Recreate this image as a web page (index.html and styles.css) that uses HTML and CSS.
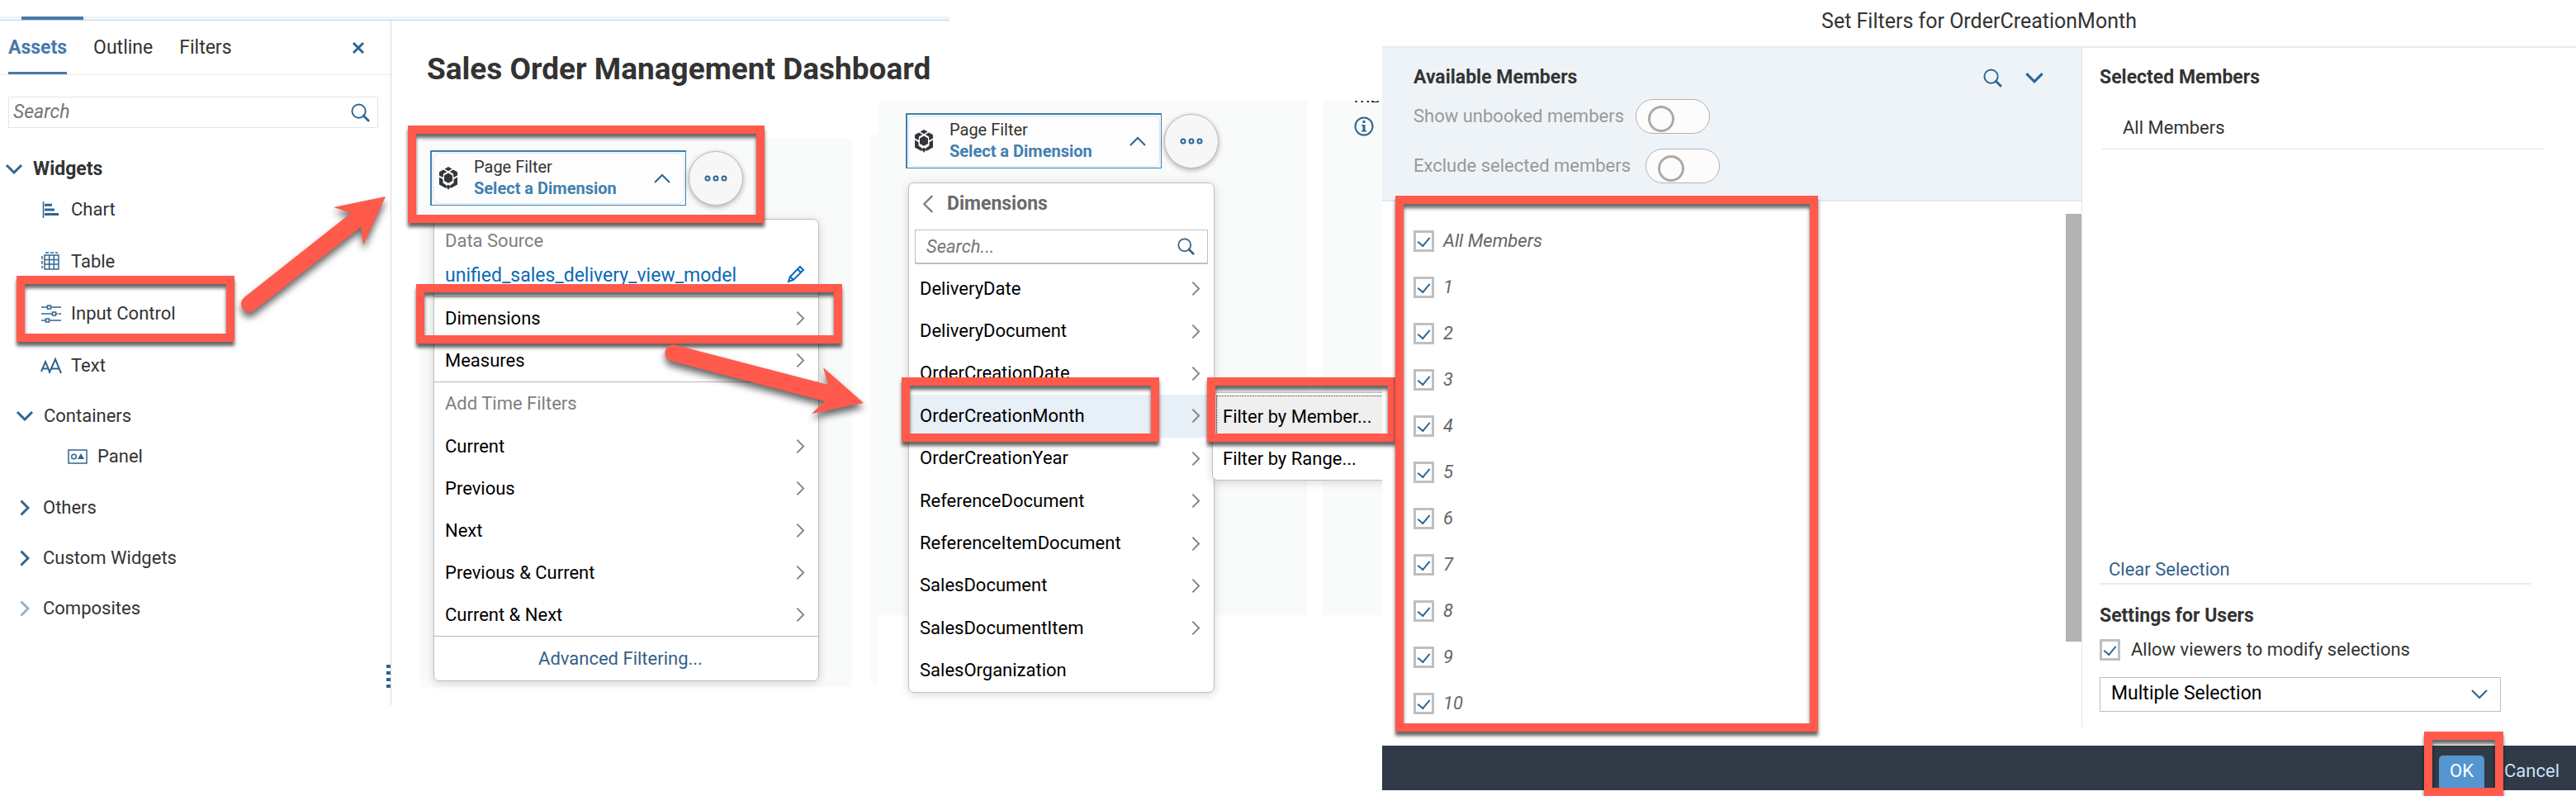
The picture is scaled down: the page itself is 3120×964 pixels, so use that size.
FILE: index.html
```html
<!DOCTYPE html>
<html lang="en">
<head>
<meta charset="utf-8">
<title>Sales Order Management Dashboard</title>
<link rel="stylesheet" href="styles.css">
</head>
<body>
<svg class="defs" aria-hidden="true">
  <symbol id="right" viewBox="0 0 12 20"><path d="M1.500 1.500 10 10 1.500 18.500"/></symbol>
  <symbol id="down" viewBox="0 0 22 14"><path d="M2 2 11 11 20 2"/></symbol>
  <symbol id="search" viewBox="0 0 24 24"><circle cx="10" cy="10" r="8.500"/><path d="m16 16 6 6" class="heavy"/></symbol>
  <symbol id="cube" viewBox="0 0 24 28">
    <path class="solid" d="M12 0 16.500 2.600 12 5.200 7.500 2.600zM6 3.500 10.300 6 6 8.600 5.600 13 1 10.400V6.200zM18 3.500 13.700 6 18 8.600 18.400 13 23 10.400V6.200zM12 7.600 17 10.400V17L12 19.800 7 17V10.400zM1 12.500 5.500 15.200V19.500L9.500 22.200V26.300L1 21.600zM23 12.500 18.500 15.200V19.500L14.500 22.200V26.300L23 21.600zM12 21.800 14.800 23.500 12 28 9.200 23.500z"/>
  </symbol>
</svg>
<main class="page">
  <section class="workspace">
    <div class="strip"><span class="strip-mark"></span></div>
    <div class="work">
      <aside class="side">
        <nav class="tabs">
          <button class="tab active">Assets</button>
          <button class="tab">Outline</button>
          <button class="tab">Filters</button>
          <button class="close" aria-label="Close"><svg class="ic-close" viewBox="0 0 16 16"><path d="m2 2 12 12M14 2 2 14"/></svg></button>
        </nav>
        <div class="side-search">
          <input type="search" placeholder="Search" aria-label="Search assets">
          <svg class="ic-search"><use href="#search"/></svg>
        </div>
        <div class="tree">
          <button class="group root"><svg class="ic-down"><use href="#down"/></svg>Widgets</button>
          <button class="item"><svg class="ic-item" viewBox="0 0 26 24"><path d="M3.500 2v20" /><path class="bar" d="M5 6.200h9M5 12h12M5 17.500h17"/></svg>Chart</button>
          <button class="item"><svg class="ic-item" viewBox="0 0 26 24"><path d="M5 4h17v17H5zM5 9.500h17M5 15h17M10.700 4v17M16.300 4v17M6 1h4M12 1h4M18 1h3M2 5v4M2 11v4M2 17v3"/></svg>Table</button>
          <div class="anchor">
            <button class="item"><svg class="ic-item" viewBox="0 0 26 24"><path d="M1 4h7M13 4h12M8.500 2h4v4h-4zM1 12h13M19 12h2M22 12h3M14.500 10h4v4h-4zM1 20h5M11 20h14M6.500 18h4v4h-4z"/></svg>Input Control</button>
            <span class="callout on-input"></span>
            <svg class="arrow arrow-up" viewBox="0 0 180 150"><path d="M171 6 108 19 129 26 0 128A10 10 0 0 0 12 144L141 43 144 65Z" transform="translate(6 0)"/></svg>
          </div>
          <button class="item"><svg class="ic-item" viewBox="0 0 26 24"><path class="bold" d="M1 19 6 7l5 12M3 15.500h6M10.500 21 18 4l7 17M13 15.500h10"/></svg>Text</button>
          <button class="group"><svg class="ic-down"><use href="#down"/></svg>Containers</button>
          <button class="item sub"><svg class="ic-item" viewBox="0 0 26 24"><path d="M2 4h22v16H2z"/><circle cx="8.500" cy="12" r="2.800"/><path class="solid" d="M13 15 17 8l4 7z"/></svg>Panel</button>
          <button class="group closed"><svg class="ic-right"><use href="#right"/></svg>Others</button>
          <button class="group closed next"><svg class="ic-right"><use href="#right"/></svg>Custom Widgets</button>
          <button class="group closed next"><svg class="ic-right faded"><use href="#right"/></svg>Composites</button>
        </div>
        <div class="grip"><i></i><i></i><i></i><i></i></div>
      </aside>

      <section class="canvas">
        <h1 class="title">Sales Order Management Dashboard</h1>
        <div class="board">
          <div class="panel first">
            <div class="filter-row">
              <button class="filter"><span class="filter-box"><svg class="ic-cube"><use href="#cube"/></svg><span class="filter-text"><span>Page Filter</span><b>Select a Dimension</b></span><svg class="ic-up"><use href="#down"/></svg></span></button>
              <button class="more" aria-label="More"><svg class="ic-dots" viewBox="0 0 28 10"><circle cx="4" cy="5" r="2.500"/><circle cx="14" cy="5" r="2.500"/><circle cx="24" cy="5" r="2.500"/></svg></button>
              <span class="callout on-filter"></span>
            </div>
            <div class="menu main-menu">
              <div class="caption">Data Source</div>
              <div class="source"><a href="#">unified_sales_delivery_view_model</a><svg class="ic-pen" viewBox="0 0 22 22"><path d="M2 20 4 14 16 2l4 4L8 18zM13 5l4 4M4 14l4 4"/></svg></div>
              <div class="anchor">
                <button class="entry">Dimensions<svg class="ic-chev"><use href="#right"/></svg></button>
                <span class="callout on-dimensions"></span>
                <svg class="arrow arrow-right" viewBox="0 0 250 100"><path d="M239 77 190 34 196 55 12 7A10 10 0 0 0 5 26L192 75 176 90Z"/></svg>
              </div>
              <button class="entry">Measures<svg class="ic-chev"><use href="#right"/></svg></button>
              <div class="caption ruled">Add Time Filters</div>
              <button class="entry">Current<svg class="ic-chev"><use href="#right"/></svg></button>
              <button class="entry">Previous<svg class="ic-chev"><use href="#right"/></svg></button>
              <button class="entry">Next<svg class="ic-chev"><use href="#right"/></svg></button>
              <button class="entry">Previous &amp; Current<svg class="ic-chev"><use href="#right"/></svg></button>
              <button class="entry">Current &amp; Next<svg class="ic-chev"><use href="#right"/></svg></button>
              <button class="advanced">Advanced Filtering...</button>
            </div>
          </div>

          <div class="edge"></div>
          <div class="panel second">
            <div class="filter-row">
              <button class="filter"><span class="filter-box"><svg class="ic-cube"><use href="#cube"/></svg><span class="filter-text"><span>Page Filter</span><b>Select a Dimension</b></span><svg class="ic-up"><use href="#down"/></svg></span></button>
              <button class="more" aria-label="More"><svg class="ic-dots" viewBox="0 0 28 10"><circle cx="4" cy="5" r="2.500"/><circle cx="14" cy="5" r="2.500"/><circle cx="24" cy="5" r="2.500"/></svg></button>
            </div>
            <div class="menu dim-menu">
              <button class="back"><svg class="ic-back"><use href="#right"/></svg>Dimensions</button>
              <div class="menu-search"><input type="search" placeholder="Search..." aria-label="Search dimensions"><svg class="ic-search small"><use href="#search"/></svg></div>
              <div class="dims">
                <button class="entry">DeliveryDate<svg class="ic-chev"><use href="#right"/></svg></button>
                <button class="entry">DeliveryDocument<svg class="ic-chev"><use href="#right"/></svg></button>
                <button class="entry">OrderCreationDate<svg class="ic-chev"><use href="#right"/></svg></button>
                <div class="anchor">
                  <button class="entry chosen">OrderCreationMonth<svg class="ic-chev"><use href="#right"/></svg></button>
                  <span class="callout on-month"></span>
                  <div class="menu submenu">
                    <button class="entry focused">Filter by Member...</button>
                    <button class="entry">Filter by Range...</button>
                    <span class="callout on-member"></span>
                  </div>
                </div>
                <button class="entry">OrderCreationYear<svg class="ic-chev"><use href="#right"/></svg></button>
                <button class="entry">ReferenceDocument<svg class="ic-chev"><use href="#right"/></svg></button>
                <button class="entry">ReferenceItemDocument<svg class="ic-chev"><use href="#right"/></svg></button>
                <button class="entry">SalesDocument<svg class="ic-chev"><use href="#right"/></svg></button>
                <button class="entry">SalesDocumentItem<svg class="ic-chev"><use href="#right"/></svg></button>
                <button class="entry">SalesOrganization</button>
              </div>
            </div>
          </div>
          <div class="panel third">
            <div class="clipped">me</div>
            <svg class="ic-info" viewBox="0 0 24 24"><circle cx="12" cy="12" r="10.500"/><path class="solid" d="M10.500 5h3v3h-3zM9 10h4.500v7H15v1.500H9V17h1.500v-5.500H9z"/></svg>
          </div>
        </div>
      </section>
    </div>
  </section>

  <section class="dialog" role="dialog" aria-labelledby="dlg">
    <h2 class="dialog-title" id="dlg">Set Filters for OrderCreationMonth</h2>
    <div class="dialog-body">
      <div class="available">
        <div class="options">
          <div class="options-head"><h3>Available Members</h3>
            <button aria-label="Search members"><svg class="ic-search"><use href="#search"/></svg></button>
            <button aria-label="Expand"><svg class="ic-down large"><use href="#down"/></svg></button></div>
          <label class="switch-row">Show unbooked members<input type="checkbox" class="switch"></label>
          <label class="switch-row wide">Exclude selected members<input type="checkbox" class="switch"></label>
        </div>
        <div class="list-area">
          <div class="members">
            <label class="member"><input type="checkbox" class="check" checked>All Members</label>
            <label class="member"><input type="checkbox" class="check" checked>1</label>
            <label class="member"><input type="checkbox" class="check" checked>2</label>
            <label class="member"><input type="checkbox" class="check" checked>3</label>
            <label class="member"><input type="checkbox" class="check" checked>4</label>
            <label class="member"><input type="checkbox" class="check" checked>5</label>
            <label class="member"><input type="checkbox" class="check" checked>6</label>
            <label class="member"><input type="checkbox" class="check" checked>7</label>
            <label class="member"><input type="checkbox" class="check" checked>8</label>
            <label class="member"><input type="checkbox" class="check" checked>9</label>
            <label class="member"><input type="checkbox" class="check" checked>10</label>
          </div>
          <div class="scroll"></div>
          <span class="callout on-list"></span>
        </div>
      </div>
      <div class="selected">
        <h3>Selected Members</h3>
        <div class="picked">All Members</div>
        <button class="clear">Clear Selection</button>
        <h3 class="settings">Settings for Users</h3>
        <label class="allow"><input type="checkbox" class="check" checked>Allow viewers to modify selections</label>
        <div class="select-box"><select aria-label="Selection type"><option>Multiple Selection</option></select><svg class="ic-select"><use href="#down"/></svg></div>
      </div>
    </div>
    <footer class="foot">
      <div class="anchor"><button class="ok">OK</button><span class="callout on-ok"></span></div>
      <button class="cancel">Cancel</button>
    </footer>
  </section>
</main>
</body>
</html>
```
FILE: styles.css
```css
* { box-sizing: border-box; }
body {
  margin: 0;
  min-height: 100vh;
  background: #fff;
  color: #333;
  font: 22px/26px Roboto, "Liberation Sans", sans-serif;
}
button, input, select { font: inherit; color: inherit; }
button { background: none; border: 0; padding: 0; text-align: left; cursor: pointer; }
h1, h2, h3 { margin: 0; }
h3 { font-size: 23px; line-height: 26px; font-weight: 700; }
svg { fill: none; stroke: #2f6590; stroke-width: 2; flex: none; display: block; }
.solid { fill: #2f6590; stroke: none; }
.heavy { stroke-width: 3; stroke-linecap: round; }
.defs { position: absolute; width: 0; height: 0; }

.page { display: flex; align-items: flex-start; }
.workspace { flex: 1674 1 0; min-width: 0; padding-top: 20px; }
.strip { width: 1150px; height: 5px; background: #eef4f8; border-bottom: 1px solid #c9d9ea; }
.strip-mark { display: block; width: 75px; height: 4px; margin-left: 26px; background: #4779ab; }
.work { display: flex; }
.anchor { position: relative; }

/* Assets side panel */
.side { position: relative; width: 474px; flex: none; border-right: 1px solid #d9d9d9; min-height: 829px; }
.tabs { display: flex; gap: 32px; height: 66px; padding: 0 31px 0 10px; border-bottom: 1px solid #ebebeb; font-size: 23px; }
.tab.active { color: #4779ab; font-weight: 700; border-bottom: 3px solid #4779ab; padding-top: 3px; }
.close { margin-left: auto; }
.ic-close { width: 16px; height: 16px; stroke-width: 3; }
.side-search { display: flex; align-items: center; margin: 26px 15px 0 10px; height: 38px; padding: 0 9px 0 5px; border: 1px solid #e5e5e5; }
.side-search input { font-size: 23px; }
input[type="search"] { flex: 1; min-width: 0; border: 0; outline: 0; padding: 0; background: none; appearance: none; }
input::placeholder { color: #757575; font-style: italic; opacity: 1; }
.ic-search { width: 23px; height: 23px; }
.ic-search.small { width: 21px; height: 21px; }
.tree { display: flex; flex-direction: column; padding-top: 32px; }
.group { display: flex; align-items: center; height: 36px; margin-top: 12px; padding-left: 19px; gap: 12px; }
.group.root { height: 35px; margin-top: 0; padding-left: 6px; font-size: 23px; font-weight: 700; }
.group.closed { padding-left: 24px; gap: 16px; margin-top: 13px; }
.group.closed.next { margin-top: 25px; }
.item { display: flex; align-items: center; gap: 11px; width: 100%; height: 63px; padding-left: 49px; }
.item.sub { height: 62px; padding-left: 81px; }
.ic-down { width: 22px; height: 14px; stroke-width: 3; }
.ic-right { width: 12px; height: 20px; stroke-width: 3; }
.faded { opacity: .5; }
.ic-item { width: 26px; height: 24px; stroke-width: 1.5; }
.bar { stroke-width: 3; }
.bold { stroke-width: 2; }
.grip { position: absolute; right: 0; bottom: 21px; display: grid; gap: 4px; }
.grip i { width: 5px; height: 4px; background: #2f6590; }

/* Canvas */
.canvas { flex: 1; min-width: 0; }
.title { padding: 37px 0 16px 43px; font-size: 37px; line-height: 44px; font-weight: 700; white-space: nowrap; }
.board { display: flex; align-items: flex-start; }
.panel { background: #f8fbfa; }
.first { width: 523px; flex: none; margin: 45px 0 0 35px; padding: 15px 0 7px 12px; }
.edge { width: 9px; height: 666px; flex: none; margin: 41px 0 0 23px; background: #f8fbfa; }
.second { position: relative; width: 519px; height: 623px; flex: none; padding: 15px 0 0 33px; }
.third { flex: 1; height: 623px; margin-left: 19px; padding-left: 38px; }
.clipped { height: 2px; display: flex; align-items: flex-end; overflow: hidden; line-height: 12px; color: #000; }
.ic-info { width: 24px; height: 24px; margin-top: 17px; }

.filter-row { position: relative; display: flex; align-items: center; gap: 3px; }
.filter { width: 310px; height: 67px; padding: 1px; border: 1px solid #4080b0; border-width: 2px 1px 1px 2px; font-size: 20px; line-height: 26px; }
.filter-box { display: flex; align-items: center; height: 100%; border: 1px solid #d5e7f5; border-radius: 8px; background: #fdfdfd; padding: 0 15px 0 6px; }
.ic-cube { width: 24px; height: 28px; }
#cube .solid { fill: #32363a; }
.filter-text { display: grid; margin-left: 19px; padding-bottom: 2px; flex: 1; }
.filter-text b { color: #4080b0; }
.ic-up { width: 22px; height: 14px; transform: rotate(180deg); }
.more { display: grid; place-items: center; width: 66px; height: 66px; border-radius: 50%; background: #f7f7f7; border: 1px solid #bbb; box-shadow: 0 2px 6px rgba(0,0,0,.3); }
.ic-dots { width: 28px; height: 10px; }

.menu { background: #fff; border: 1px solid #bfbfbf; border-radius: 7px; box-shadow: 0 2px 12px rgba(0,0,0,.16); color: #000; }
.main-menu { width: 467px; margin: 16px 0 0 4px; }
.caption { display: flex; align-items: center; height: 52px; padding: 0 13px; color: #808080; }
.caption.ruled { border-top: 1px solid #b8b8b8; height: 53px; }
.source { display: flex; justify-content: space-between; height: 42px; padding: 3px 16px 0 13px; border-bottom: 1px solid #b8b8b8; }
.source a { color: #0a6ab4; text-decoration: none; font-size: 23px; }
.ic-pen { width: 22px; height: 22px; stroke: #0a6ab4; }
.entry { display: flex; align-items: center; justify-content: space-between; width: 100%; height: 51px; padding: 0 16px 0 13px; }
.ic-chev { width: 11px; height: 19px; stroke: #808080; }
.advanced { display: block; width: 100%; height: 54px; padding-right: 14px; border-top: 1px solid #b8b8b8; text-align: center; color: #346187; }

.dim-menu { position: absolute; left: 36px; top: 99px; width: 371px; }
.back { display: flex; align-items: center; gap: 16px; height: 56px; padding: 0 0 6px 16px; font-size: 23px; font-weight: 700; color: #6a6a6a; }
.ic-back { width: 14px; height: 24px; stroke: #808080; transform: rotate(180deg); }
.menu-search { display: flex; align-items: center; height: 42px; margin: 0 7px; padding: 0 15px 0 13px; border: 1px solid #bfbfbf; border-bottom-width: 2px; }
.dims { display: grid; grid-auto-rows: 1fr; height: 518px; padding: 4px 0 0; }
.dims .entry { height: 100%; }
.chosen { background: #e7eff7; }
.submenu { position: absolute; left: 367px; top: -3px; width: 220px; padding-top: 3px; }
.dims .submenu .entry { height: 51px; padding-left: 12px; }
.submenu .focused { margin-left: 4px; background: #efefef; border: 1px dotted #333; }
.dims .submenu .focused { padding-left: 7px; }

/* Dialog */
.dialog { position: relative; flex: 1446 1 0; min-width: 0; background: #fff; }
.dialog-title { height: 58px; padding-bottom: 4px; border-bottom: 2px solid #ebebeb; font-size: 25px; line-height: 52px; font-weight: 400; text-align: center; }
.dialog-body { display: grid; grid-template-columns: 848fr 598fr; }
.available { border-right: 1px solid #e2e6ea; }
.options { background: #eef3f8; border-bottom: 2px solid #dfe9f3; padding: 23px 45px 20px 38px; color: #999; }
.options-head { display: flex; align-items: center; gap: 27px; color: #333; }
.options-head h3 { flex: 1; }
.switch-row { display: flex; align-items: center; gap: 14px; margin-top: 13px; }
.switch-row.wide { margin-top: 18px; gap: 18px; }
.switch { appearance: none; width: 90px; height: 42px; margin: 0; border: 1px solid #b3b3b3; border-radius: 21px; background: #fcfcfc; padding: 7px 14px; }
.switch::before { content: ""; display: block; width: 26px; height: 26px; border: 3px solid #aaa; border-radius: 50%; }
.list-area { position: relative; display: flex; }
.members { flex: 1; padding: 20px 0 0 38px; }
.member { display: flex; align-items: center; gap: 11px; height: 56px; font-style: italic; color: #666; }
.check { appearance: none; width: 25px; height: 26px; margin: 0; border: 3px solid #bfbfbf; background: #fff; display: grid; place-items: center; flex: none; }
.check:checked::before { content: ""; width: 7px; height: 12px; margin-bottom: 3px; border: solid #2f6590; border-width: 0 2px 2px 0; transform: rotate(40deg); }
.scroll { width: 19px; height: 518px; margin-top: 15px; background: #b2b2b2; }
.selected { display: flex; flex-direction: column; padding: 23px 0 18px 21px; }
.picked { margin: 35px 39px 0 3px; padding: 0 0 12px 25px; border-bottom: 1px solid #e2e2e2; }
.clear { margin: auto 55px 0 0; padding: 0 0 3px 11px; border-bottom: 2px solid #ebebeb; color: #346187; }
.settings { margin-top: 25px; }
.allow { display: flex; align-items: center; gap: 13px; margin-top: 15px; }
.select-box { position: relative; width: 486px; margin-top: 20px; }
.select-box select { appearance: none; display: block; width: 100%; height: 42px; padding: 0 13px 2px; border: 1px solid #bfbfbf; background: #fff; color: #000; border-radius: 0; font-size: 23px; }
.ic-select { position: absolute; right: 15px; top: 14px; width: 22px; height: 14px; pointer-events: none; }
.ic-down.large { width: 24px; height: 15px; }
.foot { display: flex; align-items: flex-end; justify-content: flex-end; gap: 24px; height: 54px; margin-top: 23px; padding-right: 20px; background: #303b47; }
.ok { display: block; width: 55px; height: 42px; padding-bottom: 4px; border-radius: 5px; background: #5596d1; color: #fff; text-align: center; }
.cancel { height: 42px; padding-bottom: 4px; color: #c9e0f8; }

/* Highlight frames and arrows lying over the interface */
.callout { position: absolute; z-index: 2; border: 10px solid #ff5a4c; pointer-events: none; box-shadow: 0 5px 4px rgba(0,0,0,.6), inset 0 5px 4px rgba(0,0,0,.6); }
.on-input { left: 20px; top: -14px; width: 264px; height: 80px; }
.on-filter { left: -27px; top: -30px; width: 432px; height: 118px; }
.on-dimensions { left: -22px; top: -16px; width: 516px; height: 72px; }
.on-month { left: -9px; top: -21px; width: 312px; height: 78px; }
.on-member { left: -7px; top: -19px; width: 229px; height: 78px; }
.on-list { left: 16px; top: -7px; width: 512px; height: 649px; }
.on-ok { left: -18px; top: -29px; width: 96px; height: 78px; }
.arrow { position: absolute; z-index: 2; overflow: visible; pointer-events: none; filter: drop-shadow(0 6px 4px rgba(0,0,0,.6)); }
.arrow path { fill: #ff5a4c; stroke: none; }
.arrow-up { left: 290px; top: -116px; width: 180px; height: 150px; }
.arrow-right { left: 281px; top: 51px; width: 250px; height: 100px; }
```
